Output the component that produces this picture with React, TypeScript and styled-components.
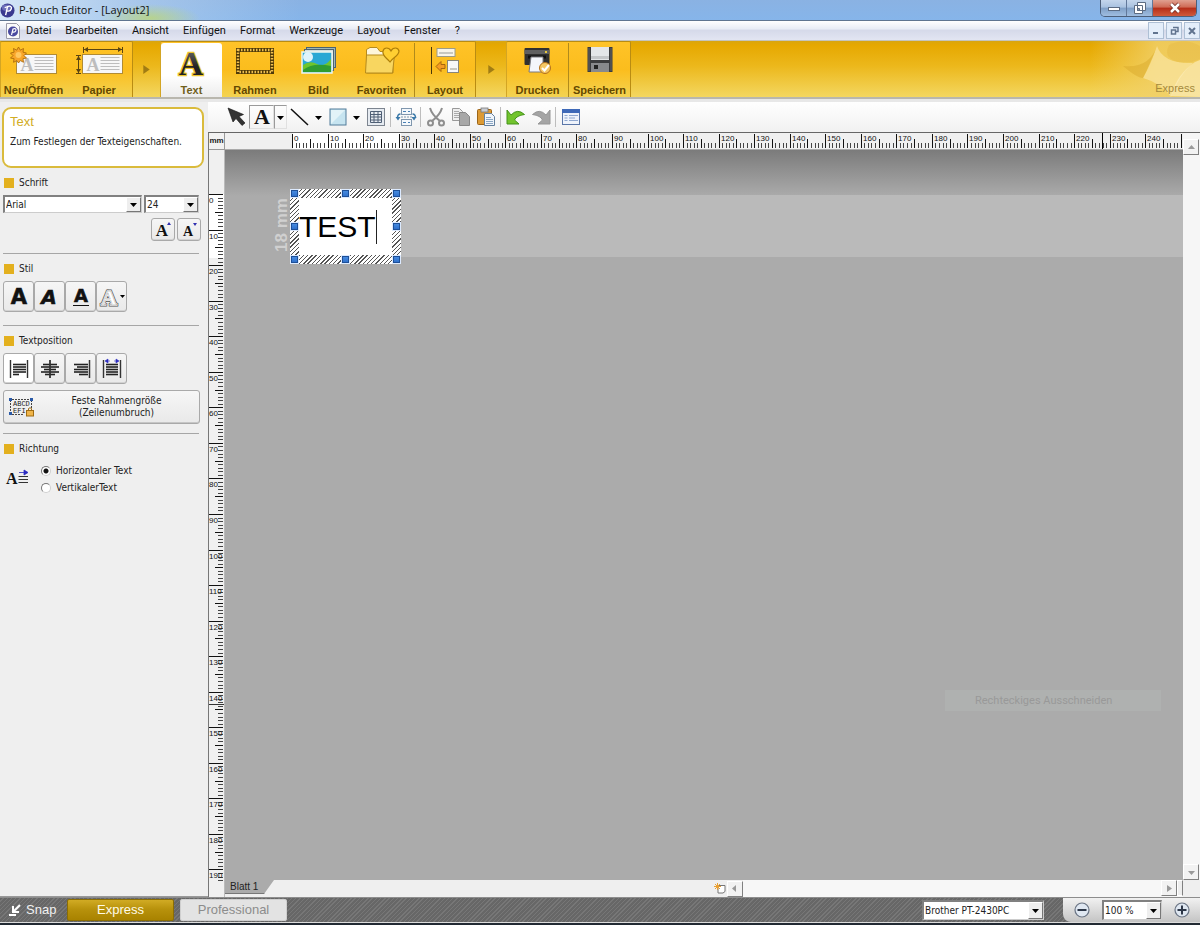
import React, { useLayoutEffect, useRef, useState } from 'react';
import styled, { createGlobalStyle, css } from 'styled-components';

const MM = 3.555;
const UI = "'DejaVu Sans Condensed', 'Liberation Sans', sans-serif";
const MENU = "Roboto, 'Liberation Sans', sans-serif";
const SANS = "'Liberation Sans', Arial, sans-serif";

const Global = createGlobalStyle`
  *, *::before, *::after { box-sizing: border-box; }
  body { margin: 0; font: 10px/14px ${UI}; color: #222; background: #efefef; }
  button, input, select { font: inherit; color: inherit; margin: 0; padding: 0; }
  button { border: 0; background: none; }
  svg { display: block; flex: none; overflow: visible; }
`;

const App = styled.div`
  height: 100vh;
  min-height: 600px;
  display: flex;
  flex-direction: column;
  overflow: hidden;
`;

/* ---------- title and menu ---------- */

const TitleBar = styled.header`
  display: flex;
  align-items: center;
  height: 21px;
  padding-right: 3px;
  gap: 4px;
  font: 11px/20px 'Open Sans', sans-serif;
  color: #111;
  background:
    radial-gradient(ellipse 50px 14px at 150px 18px, rgba(190, 215, 110, 0.75), transparent),
    linear-gradient(90deg, rgba(225, 238, 250, 0.85), rgba(190, 215, 240, 0.5) 150px, transparent 300px),
    linear-gradient(#8ab2e3, #86b5ea);
  border-bottom: 1px solid #5f7590;
`;

const WindowButtons = styled.div`
  display: flex;
  align-self: flex-start;
  margin-left: auto;
  border: 1px solid #4c5f7a;
  border-top: 0;
  border-radius: 0 0 5px 5px;
  overflow: hidden;
`;

const WindowButton = styled.button<{ $close?: boolean }>`
  display: flex;
  align-items: center;
  justify-content: center;
  width: ${p => (p.$close ? 43 : 26)}px;
  height: 16px;
  border-right: ${p => (p.$close ? '0' : '1px solid #61789a')};
  background: ${p => (p.$close
    ? 'linear-gradient(#e0a090, #cf6a55 45%, #b52d18 50%, #cf5a3c)'
    : 'linear-gradient(#c4d6ec, #a9c2e0 45%, #7f9fc6 50%, #9fbde0)')};
`;

const MenuBar = styled.nav`
  display: flex;
  align-items: center;
  height: 20px;
  padding-left: 6px;
  font: 11px/18px ${MENU};
  background: linear-gradient(#fff, #e9edf6 40%, #d6daea 50%, #e2e5f2);
  border-bottom: 1px solid #c5c4bc;
`;

const MenuItem = styled.button`
  height: 18px;
  margin-left: 14px;
  color: #111;
  &:first-of-type { margin-left: 6px; }
`;

const MdiButtons = styled.div`
  display: flex;
  gap: 2px;
  margin-left: auto;
`;

const MdiButton = styled.button`
  display: flex;
  align-items: center;
  justify-content: center;
  width: 16px;
  height: 17px;
  border: 1px solid #aebfd4;
  background: #e4eefa;
`;

/* ---------- ribbon ---------- */

const Ribbon = styled.div`
  display: flex;
  height: 58px;
  background: linear-gradient(#d9a50f, #e6a800 4px, #ecb81c 45%, #f4d760);
  border-bottom: 2px solid #b9b7ae;
`;

const RibbonGroup = styled.div`
  display: flex;
  padding-top: 1px;
  border: 1px solid #b98c12;
  border-left-color: #d3a524;
  border-bottom: 0;
  border-radius: 2px 2px 0 0;
  background: linear-gradient(#ffc328, #fbbd1d 50%, #f3d352);
`;

const RibbonButton = styled.button<{ $w: number; $active?: boolean; $line?: boolean }>`
  display: flex;
  flex-direction: column;
  align-items: center;
  justify-content: space-between;
  width: ${p => p.$w}px;
  padding-top: 4px;
  font: bold 11px/14px ${SANS};
  color: #644800;
  white-space: nowrap;
  ${p => p.$line && css`border-right: 1px solid #b08a1c;`}
  ${p => p.$active && css`
    color: #70601c;
    background: linear-gradient(#fff 60%, #ececec);
    border-radius: 3px 3px 0 0;
  `}
`;

const RibbonArrow = styled.div<{ $w: number }>`
  display: flex;
  align-items: center;
  justify-content: center;
  width: ${p => p.$w}px;
`;

const RibbonBrand = styled.div`
  display: flex;
  align-items: flex-end;
  justify-content: flex-end;
  width: 110px;
  margin-left: auto;
  position: relative;
  color: #a58a3c;
  font: 11px/14px ${SANS};
  padding: 0 5px 2px 0;
  background: linear-gradient(90deg, rgba(240, 205, 90, 0), rgba(241, 208, 104, 0.85) 60%);
`;

const BrandArt = styled.svg`
  position: absolute;
  top: 0;
  right: 0;
  overflow: hidden;
`;

const BrandName = styled.span`
  position: relative;
`;

/* ---------- body ---------- */

const Body = styled.div`
  flex: 1;
  min-height: 0;
  display: flex;
  border-top: 3px solid #e8e8e8;
`;

const Sidebar = styled.aside`
  width: 208px;
  flex: none;
  padding: 5px 4px 0 2px;
  background: #efefef;
  border-bottom: 1px solid #999;
`;

const InfoCard = styled.section`
  height: 61px;
  padding: 5px 6px;
  border: 2px solid #dabb3c;
  border-radius: 9px;
  background: #fff;
`;

const InfoTitle = styled.h2`
  margin: 0 0 5px;
  font: 13px/16px ${SANS};
  color: #d2ad25;
`;

const InfoText = styled.p`
  margin: 0;
  white-space: nowrap;
`;

const Section = styled.section<{ $h: number }>`
  height: ${p => p.$h}px;
  margin: 0 5px 0 1px;
  padding-top: 8px;
  & + & { border-top: 1px solid #a6a6a6; }
`;

const SectionTitle = styled.h3`
  display: flex;
  align-items: center;
  gap: 5px;
  margin: 0 0 5px 1px;
  font: 10px/14px ${UI};
  &::before {
    content: '';
    width: 10px;
    height: 10px;
    background: #e3b01e;
  }
`;

const ButtonRow = styled.div<{ $end?: boolean }>`
  display: flex;
  gap: ${p => (p.$end ? 2 : 0)}px;
  justify-content: ${p => (p.$end ? 'flex-end' : 'flex-start')};
  margin: ${p => (p.$end ? '5px -2px 0 0' : '0')};
`;

const PanelButton = styled.button<{ $small?: boolean; $on?: boolean }>`
  display: flex;
  align-items: center;
  justify-content: center;
  width: ${p => (p.$small ? 24 : 31)}px;
  height: ${p => (p.$small ? 23 : 31)}px;
  border: 1px solid #a9a9a9;
  border-radius: 3px;
  background: ${p => (p.$on ? '#fff' : 'linear-gradient(#f6f6f6, #e9e9e9)')};
  box-shadow: inset 0 -1px #d2d2d2;
`;

const WideButton = styled.button`
  display: flex;
  align-items: center;
  width: 197px;
  height: 34px;
  margin-top: 6px;
  padding-left: 4px;
  border: 1px solid #a9a9a9;
  border-radius: 3px;
  background: linear-gradient(#f6f6f6, #e9e9e9);
  box-shadow: inset 0 -1px #c6c6c6;
  line-height: 12px;
`;

const WideLabel = styled.span`
  flex: 1;
`;

const SelectRow = styled.div`
  display: flex;
  gap: 2px;
`;

const SelectBox = styled.span<{ $w: number; $h?: number }>`
  position: relative;
  display: block;
  width: ${p => p.$w}px;
  height: ${p => p.$h ?? 18}px;
  border: 1px solid #808080;
  border-width: 2px 1px 1px 2px;
  border-right-color: #ccc;
  border-bottom-color: #ccc;
  background: #fff;
`;

const SelectArrow = styled.span`
  position: absolute;
  top: 0;
  right: 0;
  bottom: 0;
  display: flex;
  align-items: center;
  justify-content: center;
  width: 15px;
  background: #eee;
  border: 1px solid #fff;
  border-right-color: #777;
  border-bottom-color: #777;
  pointer-events: none;
`;

const Select = styled.select`
  appearance: none;
  display: block;
  width: 100%;
  height: 100%;
  padding-left: 1px;
  border: 0;
  border-radius: 0;
  background: transparent;
`;

const Direction = styled.div`
  display: flex;
  align-items: center;
  gap: 11px;
  padding: 1px 0 0 3px;
`;

const Options = styled.div`
  display: flex;
  flex-direction: column;
`;

const RadioLabel = styled.label`
  display: flex;
  align-items: center;
  gap: 5px;
  height: 17px;
`;

const Radio = styled.input`
  appearance: none;
  width: 10px;
  height: 10px;
  border: 1px solid #777;
  border-right-color: #d0d0d0;
  border-bottom-color: #d0d0d0;
  border-radius: 50%;
  background: #fff;
  &:checked { background: radial-gradient(circle, #111 2px, #fff 3px); }
`;

/* ---------- editor ---------- */

const Editor = styled.main`
  flex: 1;
  min-width: 0;
  display: flex;
  flex-direction: column;
`;

const Toolbar = styled.div`
  display: flex;
  align-items: center;
  height: 30px;
  padding-left: 16px;
  background: linear-gradient(#fff, #f1f1f1);
`;

const Tool = styled.button<{ $drop?: boolean; $on?: boolean }>`
  display: flex;
  align-items: center;
  justify-content: center;
  width: ${p => (p.$drop ? 13 : 25)}px;
  height: 24px;
  ${p => p.$on && css`
    border: 1px solid #9a9a9a;
    border-right-color: #e0e0e0;
    border-bottom-color: #e0e0e0;
  `}
`;

const ToolLine = styled.span`
  width: 1px;
  height: 20px;
  margin: 0 2px;
  background: #bdbdbd;
`;

const Workspace = styled.div`
  flex: 1;
  min-height: 0;
  display: grid;
  grid-template-columns: 16px minmax(0, 1fr) 17px;
  grid-template-rows: 17px minmax(0, 1fr) 17px;
  border-top: 1px solid #666;
  border-left: 1px solid #777;
`;

const UnitCell = styled.div`
  display: flex;
  align-items: center;
  justify-content: center;
  font: bold 8px/10px ${SANS};
  color: #222;
  background: #f2f2f2;
  border-right: 1px solid #999;
  border-bottom: 1px solid #999;
`;

const RulerBox = styled.div<{ $tall?: boolean }>`
  overflow: hidden;
  background: #f0f0f0;
  ${p => p.$tall && css`grid-row: 2 / 4;`}
  svg { width: 100%; height: 100%; }
  text { font: 8px ${SANS}; fill: #111; }
`;

const ScrollColumn = styled.div`
  grid-row: 1 / 3;
  grid-column: 3;
  display: flex;
  flex-direction: column;
  justify-content: space-between;
  padding-top: 6px;
  background: #f6f6f6;
`;

const ScrollButton = styled.button`
  display: flex;
  align-items: center;
  justify-content: center;
  width: 16px;
  height: 16px;
  background: #f2f2f2;
  border: 1px solid #fff;
  border-right-color: #808080;
  border-bottom-color: #808080;
`;

const Canvas = styled.div`
  grid-column: 2;
  position: relative;
  overflow: hidden;
  background: linear-gradient(#7b7b7b, #949494 24px, #ababab 46px);
`;

const Tape = styled.div`
  position: absolute;
  left: 68px;
  right: 0;
  top: 45px;
  height: 62px;
  background: #bababa;
`;

const TapeWidth = styled.span`
  position: absolute;
  left: 48px;
  top: 48px;
  writing-mode: vertical-rl;
  transform: rotate(180deg);
  font: bold 17px/18px ${SANS};
  color: #d0d0d0;
`;

const TextFrame = styled.div`
  position: absolute;
  left: 65px;
  top: 39px;
  width: 111px;
  height: 75px;
  padding: 9px;
  background: repeating-linear-gradient(135deg, #fff 0 2px, #555 2px 3px);
`;

const FrameInner = styled.div`
  display: flex;
  align-items: center;
  height: 100%;
  background: #fff;
`;

const FrameInput = styled.input`
  width: 77px;
  height: 34px;
  border: 0;
  outline: 0;
  background: transparent;
  font: 30px/34px ${SANS};
  color: #000;
`;

const Caret = styled.span`
  width: 1px;
  height: 34px;
  background: #222;
`;

const Handle = styled.i<{ $x: number; $y: number }>`
  position: absolute;
  left: ${p => p.$x}px;
  top: ${p => p.$y}px;
  width: 9px;
  height: 9px;
  border: 1px solid #dceaff;
  background: linear-gradient(#4a90e4, #2a6bc8);
  box-shadow: inset 0 0 0 1px #1d4f98;
`;

const Ghost = styled.div`
  position: absolute;
  left: 720px;
  top: 540px;
  width: 216px;
  height: 21px;
  padding-left: 30px;
  font: 11px/21px ${MENU};
  color: #999;
  background: #afb1b0;
`;

const SheetRow = styled.div`
  grid-column: 2;
  display: flex;
  background: #efefef;
`;

const SheetTab = styled.button`
  width: 49px;
  height: 14px;
  padding-left: 5px;
  text-align: left;
  font: 10px/13px ${SANS};
  color: #222;
  background: #ababab;
  border-bottom: 1px solid #777;
  clip-path: polygon(0 0, 100% 0, 39px 100%, 0 100%);
`;

const SheetScroll = styled.div`
  display: flex;
  justify-content: space-between;
  width: 49%;
  margin-left: auto;
  background: #f7f7f7;
`;

const SheetScrollStart = styled.div`
  display: flex;
  align-items: center;
  gap: 1px;
  background: #efefef;
`;

const SheetScrollEnd = styled.div`
  display: flex;
`;

const Splitter = styled.span`
  width: 6px;
  height: 16px;
  border: 1px solid #fff;
  border-right-color: #808080;
  background: #eee;
`;

const Corner = styled.div`
  grid-column: 3;
  background: #efefef;
`;

/* ---------- status bar ---------- */

const StatusBar = styled.footer`
  display: flex;
  align-items: center;
  height: 26px;
  flex: none;
  background: repeating-linear-gradient(135deg, #676767 0 2px, #777 2px 3px);
  border-top: 1px solid #8d8d8d;
  border-bottom: 1px solid #ddd;
`;

const Desk = styled.div`
  height: 2px;
  flex: none;
  background: #222a33;
`;

const Snap = styled.button`
  display: flex;
  align-items: center;
  gap: 4px;
  width: 67px;
  padding-left: 8px;
  font: 13px/20px ${SANS};
  color: #f2f2f2;
`;

const ModeButton = styled.button<{ $on?: boolean }>`
  width: 107px;
  height: 22px;
  margin-right: 6px;
  font: 13px/20px ${SANS};
  color: ${p => (p.$on ? '#fffbe8' : '#8c8c8c')};
  background: ${p => (p.$on ? 'linear-gradient(#d1ab24, #b8920c 45%, #a88200)' : '#e3e3e3')};
  border: 1px solid ${p => (p.$on ? '#8b6d04' : '#cfcfcf')};
  border-radius: 2px;
`;

const Printer = styled.div`
  margin-left: auto;
  margin-right: 19px;
`;

const Zoom = styled.div`
  display: flex;
  align-items: center;
  gap: 12px;
  height: 100%;
  padding: 0 10px 0 11px;
  border-radius: 0 0 0 8px;
  background: linear-gradient(#f1f1f1, #c4c4c4);
`;

/* ---------- drawings ---------- */

const Arrow = ({ dir = 'down', color = '#000', s = 7 }: { dir?: string; color?: string; s?: number }) => {
  const d: Record<string, string> = {
    down: 'M0 2h7L3.500 6z', up: 'M0 5h7L3.500 1z', left: 'M5 0v7L1 3.500z', right: 'M1 0v7l5-3.500z',
  };
  return <svg width={s} height={s} viewBox="0 0 7 7"><path d={d[dir]} fill={color} /></svg>;
};

const Logo = ({ size }: { size: number }) => (
  <svg width={size} height={size} viewBox="0 0 16 16">
    <circle cx="8" cy="8" r="7.500" fill="#39398f" />
    <ellipse cx="7" cy="5" rx="5" ry="3.500" fill="#8184cc" opacity=".7" />
    <path d="M6 13l2-9c3-1.500 5 0 4 2.500-.7 1.800-2.500 2.500-4.500 2" fill="none" stroke="#fff" strokeWidth="1.500" />
    <path d="M5 5l3-1" stroke="#fff" strokeWidth="1.300" />
  </svg>
);

const DocLogo = () => (
  <svg width="14" height="16" viewBox="0 0 14 16">
    <path d="M.5.500h10l3 3v12H.500z" fill="#fafafa" stroke="#9a9aa8" />
    <circle cx="7" cy="8.500" r="5" fill="#4a4aa0" />
    <path d="M5.500 12l1.500-6c2-1 3.500 0 2.800 1.700-.5 1.200-1.700 1.600-3 1.300" fill="none" stroke="#fff" strokeWidth="1.200" />
  </svg>
);

const CardLines = ({ x, y }: { x: number; y: number }) => (
  <g>
    <rect x={x} y={y} width="40" height="19" fill="#f7f7f7" stroke="#b08b35" />
    <text x={x + 4} y={y + 16} fontFamily="Liberation Serif" fontWeight="bold" fontSize="18" fill="#bdbdbd">A</text>
    {[4, 7, 10, 13, 16].map(o => <path key={o} d={`M${x + 18} ${y + o - 1}h19`} stroke="#bdbdbd" />)}
  </g>
);

const NewIcon = () => (
  <svg width="48" height="32" viewBox="0 0 48 32">
    <CardLines x={6.5} y={7.5} />
    <path d="M8.500 0l1.800 3.200L13.500 1.500l-.5 3.700 3.500.8-2.500 2.600 2.500 2.500-3.500.6.5 3.600-3.200-1.700L8.500 16l-1.700-2.400-3.300 1.700.6-3.600-3.600-.6L3 8.600.500 6l3.600-.8-.6-3.700L6.800 3.200z" fill="#f8a52a" stroke="#a56408" strokeWidth=".8" />
    <circle cx="8.500" cy="8" r="3" fill="#ffc860" />
  </svg>
);

const PaperIcon = () => (
  <svg width="48" height="32" viewBox="0 0 48 32">
    <CardLines x={7.5} y={7.5} />
    <g stroke="#5c4510" fill="#5c4510">
      <path d="M8.500 0v6M47.500 0v6M9 2.500h38M1 8.500h5M1 26.500h5M3.500 9v17" />
      <path d="M9 2.500l4-2.500v5zM47 2.500l-4-2.500v5zM3.500 9l-2.500 4h5zM3.500 26l-2.500-4h5z" stroke="none" />
    </g>
  </svg>
);

const TextIcon = () => (
  <svg width="34" height="32" viewBox="0 0 34 32">
    <defs><linearGradient id="ta" x1="0" y1="0" x2="0" y2="1"><stop offset="0" stopColor="#777" /><stop offset=".6" stopColor="#222" /></linearGradient></defs>
    <text x="16" y="28" textAnchor="middle" fontFamily="Liberation Serif" fontWeight="bold" fontSize="34" fill="url(#ta)" stroke="#edc52c" strokeWidth="2.500" paintOrder="stroke">A</text>
  </svg>
);

const FrameIcon = () => (
  <svg width="40" height="32" viewBox="0 0 40 32">
    <rect x="3" y="3" width="34" height="22" fill="none" stroke="#4f3a08" strokeWidth="4" />
    <rect x="3" y="3" width="34" height="22" fill="none" stroke="#f0c050" strokeWidth="2.500" strokeDasharray="1.500 1.500" />
  </svg>
);

const ImageIcon = () => (
  <svg width="36" height="32" viewBox="0 0 36 32">
    <rect x="5.500" y=".5" width="29" height="20" fill="#9fb8b8" stroke="#4d6370" />
    <rect x="3.500" y="2.500" width="29" height="21" fill="#d4dfdf" stroke="#4d6370" />
    <rect x="1" y="5" width="30" height="21" fill="#2aa8d4" stroke="#eef6ee" strokeWidth="1.500" />
    <circle cx="7" cy="10" r="5" fill="#dff4fb" />
    <path d="M2 18q7-5 14-1t14-5v13H2z" fill="#6fc52c" />
    <path d="M2 23q10-8 28-4v6H2z" fill="#2f9c31" />
  </svg>
);

const FavIcon = () => (
  <svg width="36" height="32" viewBox="0 0 36 32">
    <path d="M2.500 26V2.500L6 .5h7l3 4h13V26z" fill="#fdf6dc" stroke="#b68b1c" />
    <path d="M1.500 26l1-18h28l-2 18z" fill="#f8d660" stroke="#b68b1c" />
    <path d="M26 15c-4-5-8-6-7-11 1-4 6-4 8 0 2-4 7-4 8 0 0 5-6 6-9 11z" fill="#ffcf32" stroke="#af7f09" strokeWidth="1.200" />
  </svg>
);

const LayoutIcon = () => (
  <svg width="30" height="32" viewBox="0 0 30 32">
    <path d="M1.500 0v27" stroke="#4a380a" />
    <rect x="7" y="1.500" width="18" height="8" fill="#f8f5ea" stroke="#9c9c88" />
    <rect x="17.500" y="13.500" width="11" height="12" fill="#f8f8f8" stroke="#88867a" />
    <path d="M6 19.500l5-5v3h4v4h-4v3z" fill="#f59c23" stroke="#a8660d" />
    <path d="M9 6h14M20 22h7" stroke="#c8c8c0" strokeWidth="2" />
  </svg>
);

const PrintIcon = () => (
  <svg width="30" height="32" viewBox="0 0 30 32">
    <rect x="1.500" y="1" width="25" height="17" rx="1" fill="#303030" />
    <path d="M1.500 3h25v4h-25z" fill="#606060" />
    <rect x="22" y="4" width="2" height="2" fill="#e8c83c" />
    <path d="M5 10h18" stroke="#111" strokeWidth="3" />
    <path d="M8 10h12v15H6z" fill="#f4f6fb" stroke="#7a7a80" />
    <circle cx="22" cy="21" r="5.500" fill="#f6c864" stroke="#b5711c" />
    <path d="M19 21l2.500 2.500L26 18" fill="none" stroke="#fff" strokeWidth="2" />
  </svg>
);

const SaveIcon = () => (
  <svg width="28" height="32" viewBox="0 0 28 32">
    <path d="M1.500 0h25v25h-25z" fill="#3b3b3d" />
    <path d="M5 0h18v13H5z" fill="#e4e6e8" />
    <path d="M5 9h18v3H5z" fill="#c4c6c8" />
    <path d="M5 16h18v9H5z" fill="#88898c" />
    <rect x="8" y="18" width="4" height="4" fill="#222" />
    <path d="M3 1v23M25 1v23" stroke="#666" />
  </svg>
);

const Glyph = ({ size, slant, underline }: { size: number; slant?: boolean; underline?: boolean }) => (
  <svg width="26" height="24" viewBox="0 0 26 24">
    <text x={slant ? 12 : 13} y={underline ? 17 : 19} textAnchor="middle" fontSize={size} fontWeight="bold"
      fontStyle={slant ? 'italic' : 'normal'} fontFamily="DejaVu Sans" fill="#111" stroke="#111" strokeWidth=".6">A</text>
    {underline && <path d="M5 20.500h16" stroke="#111" />}
  </svg>
);

const OutlineGlyph = () => (
  <svg width="28" height="24" viewBox="0 0 28 24">
    <g fontFamily="Liberation Serif" fontSize="22" fontWeight="bold" textAnchor="middle">
      <text x="11" y="20" fill="#555" stroke="#555" strokeWidth="3">A</text>
      <text x="11" y="20" fill="#fff" stroke="#fff" strokeWidth="1.500">A</text>
      <text x="11" y="20" fill="#fff" stroke="#999" strokeWidth=".4">A</text>
    </g>
    <path d="M22 10h5l-2.500 3z" fill="#000" />
  </svg>
);

const SizeGlyph = ({ up }: { up?: boolean }) => (
  <svg width="20" height="18" viewBox="0 0 20 18">
    <text x="9" y="15" textAnchor="middle" fontSize={up ? 17 : 14} fontWeight="bold" fontFamily="Liberation Serif" fill="#111">A</text>
    <path d={up ? 'M14 4h4l-2-3z' : 'M14 2h4l-2 3z'} fill="#3030b0" />
  </svg>
);

const rowsFor: Record<string, [number, number][]> = {
  left: [[4, 17], [4, 17], [4, 17], [4, 17], [4, 10]],
  center: [[3, 17], [1, 19], [4, 16], [1, 19], [5, 15]],
  right: [[3, 17], [6, 17], [3, 17], [3, 17], [8, 17]],
  block: [[4, 16], [4, 16], [4, 16], [4, 16], [4, 16]],
};

const AlignIcon = ({ kind }: { kind: string }) => (
  <svg width="20" height="20" viewBox="0 0 20 20">
    {rowsFor[kind].map(([a, b], i) => <path key={i} d={`M${a} ${5.5 + i * 2.5}H${b}`} stroke="#222" strokeWidth="1.600" />)}
    {(kind === 'left' || kind === 'block') && <path d="M1.500 1v18M18.500 1v18" stroke="#333" strokeWidth="1.400" />}
    {kind === 'center' && <path d="M10 1v18" stroke="#333" strokeWidth="1.800" />}
    {kind === 'right' && <path d="M18.500 1v18" stroke="#333" strokeWidth="1.500" />}
    {kind === 'block' && <path d="M3 2l3-2v4zM17 2l-3-2v4zM6 2h2M12 2h2" fill="#2b2bc0" stroke="#2b2bc0" strokeWidth=".6" />}
  </svg>
);

const FixedIcon = () => (
  <svg width="26" height="20" viewBox="0 0 26 20">
    <path d="M2.500 3v13M23.500 3v8M4 2.500h18M4 17.500h12" stroke="#444" strokeDasharray="2 1" />
    <text x="5" y="9" fontSize="7" fontFamily="Liberation Mono" fill="#222">ABCD</text>
    <text x="5" y="16" fontSize="7" fontFamily="Liberation Mono" fill="#222">EFI</text>
    <path d="M1 1h3v3H1zM22 1h3v3h-3zM1 15h3v3H1z" fill="#2a5aa8" />
    <path d="M20.500 14v-2.500q1.500-1.500 3 0V14" fill="none" stroke="#a06c12" />
    <rect x="18.500" y="13.500" width="7" height="5.500" fill="#f0b54a" stroke="#a06c12" />
  </svg>
);

const DirectionIcon = () => (
  <svg width="24" height="18" viewBox="0 0 24 18">
    <text x="0" y="14" fontSize="16" fontWeight="bold" fontFamily="Liberation Serif" fill="#111">A</text>
    <path d="M12.500 6.500H22M12.500 9.500H22M12.500 12.500H22" stroke="#333" />
    <path d="M13 2.500h6M18 0l4 2.500L18 5z" fill="#2b2bc0" stroke="#2b2bc0" strokeWidth=".8" />
  </svg>
);

const icon = (body: React.ReactNode) => <svg width="20" height="20" viewBox="0 0 20 20">{body}</svg>;

const Pointer = () => icon(<path d="M1 1l5 14 3-3.500 6 7 3-2.500-6-6.500 4.500-2z" fill="#333" stroke="#111" strokeWidth=".6" />);
const Line = () => icon(<path d="M1 2l17 16" stroke="#111" strokeWidth="1.500" />);
const Square = () => icon(<g><rect x="2" y="2" width="16" height="16" fill="#c6e4f0" stroke="#537d9a" /><path d="M3 17L17 3H3z" fill="#e2f3f8" /></g>);
const TableIcon = () => icon(<g fill="none"><rect x="1.500" y="1.500" width="17" height="17" fill="#e6ebf1" stroke="#7d8590" /><path d="M4.500 4.500h11v11h-11zM4.500 7.500h11M4.500 10h11M4.500 13h11M8 4.500v11M12 4.500v11" stroke="#4f5f75" /></g>);
const FeedIcon = () => icon(<g><rect x="5.500" y="1.500" width="10" height="6" fill="#f4f8fc" stroke="#8097ae" /><rect x="5.500" y="12.500" width="10" height="6" fill="#f4f8fc" stroke="#8097ae" /><path d="M7 4.500h3M12 4.500h2M7 15.500h3M12 15.500h2" stroke="#4980b5" /><path d="M4.500 7q-3 0-3 4M16.500 7q3 0 3 4" fill="none" stroke="#3b79a9" strokeWidth="1.500" /><path d="M-.500 10h5L2 13.500zM15.500 10h5L18 13.500z" fill="#3b79a9" /><path d="M5 10h11" stroke="#8097ae" strokeDasharray="2 1" /></g>);
const Cut = () => icon(<g fill="none" stroke="#8e8e8e" strokeWidth="2"><path d="M4 1q2 7 10 13M16 1q-2 7-10 13" /><circle cx="4.500" cy="16" r="2.500" /><circle cx="15.500" cy="16" r="2.500" /></g>);
const Copy = () => icon(<g><path d="M1.500 1.500h7l3 3v9h-10z" fill="#eee" stroke="#999" /><path d="M3 4.500h5M3 6.500h5M3 8.500h5M3 10.500h5" stroke="#aaa" /><path d="M8.500 5.500h6l4 4v9h-10z" fill="#a8a8a8" stroke="#888" /></g>);
const Paste = () => icon(<g><rect x="1.500" y="2.500" width="14" height="15" rx="1" fill="#dc9a34" stroke="#9c6518" /><rect x="5" y="1" width="7" height="4" fill="#c9ccd2" stroke="#777" strokeWidth=".8" /><path d="M8.500 6.500h7l3 3v9h-10z" fill="#f0f5fb" stroke="#64809e" /><path d="M10 10.500h5M10 12.500h7M10 14.500h7M10 16.500h7" stroke="#8aa6c4" /></g>);
const Undo = () => icon(<path d="M1 3v14h12l-4.500-4q2-4.500 10-5.500-7-6.500-13.500.5z" fill="#72c42d" stroke="#45931b" />);
const Redo = () => icon(<path d="M19 3v14H7l4.500-4q-2-4.500-10-5.500 7-6.500 13.500.5z" fill="#a4a4a4" stroke="#969696" />);
const Props = () => icon(<g><rect x="1.500" y="2.500" width="17" height="15" fill="#eef3fb" stroke="#5a76a8" /><path d="M1 2h18v4H1z" fill="#3e69b8" /><path d="M3.500 8.500h3M3.500 11h3M3.500 13.500h3M8 8.500h9M8 11h6M8 13.500h9" stroke="#8fa7cf" /></g>);
const BoldA = () => (
  <svg width="22" height="22" viewBox="0 0 22 22">
    <text x="11" y="18" textAnchor="middle" fontSize="22" fontWeight="bold" fontFamily="Liberation Serif" fill="#111">A</text>
  </svg>
);

const RoundSign = ({ plus }: { plus?: boolean }) => (
  <svg width="16" height="16" viewBox="0 0 16 16">
    <circle cx="8" cy="8" r="7" fill="#dfe7f1" stroke="#6a7484" strokeWidth="1.200" />
    <path d={plus ? 'M3.500 8h9M8 3.500v9' : 'M3.500 8h9'} stroke="#2d3748" strokeWidth="2" />
  </svg>
);

/* ---------- rulers: one tick per millimetre, as many as the window shows ---------- */

const useSize = () => {
  const ref = useRef<HTMLDivElement>(null);
  const [size, setSize] = useState({ w: 0, h: 0 });
  useLayoutEffect(() => {
    const el = ref.current;
    if (!el) return;
    const read = () => setSize({ w: el.clientWidth, h: el.clientHeight });
    read();
    const observer = new ResizeObserver(read);
    observer.observe(el);
    return () => observer.disconnect();
  }, []);
  return { ref, size };
};

const count = (length: number, step: number) =>
  Array.from({ length: Math.max(0, Math.ceil(length / step)) }, (_, i) => i);

const HorizontalRuler = () => {
  const { ref, size } = useSize();
  return (
    <RulerBox ref={ref}>
      <svg>
        <rect x="68" width="108" height="17" fill="#fff" />
        {count(size.w - 68, MM).map(i => {
          const x = Math.round(67 + i * MM) + 0.5;
          const top = i % 10 === 0 ? 1 : i % 5 === 0 ? 6 : 10;
          return <path key={i} d={`M${x} ${top}V15`} stroke={i % 5 ? '#444' : '#111'} />;
        })}
        {count(size.w - 84, MM * 10).map(i => <text key={i} x={Math.round(69 + i * 10 * MM)} y="8">{i * 10}</text>)}
        <path d="M877.500 0v16" stroke="#000" />
        <path d={`M0 16.500h${size.w}`} stroke="#aaa" />
      </svg>
    </RulerBox>
  );
};

const VerticalRuler = () => {
  const { ref, size } = useSize();
  return (
    <RulerBox ref={ref} $tall>
      <svg>
        <rect y="44" width="15" height="64" fill="#fff" />
        {count(size.h - 60, MM).map(i => {
          const y = Math.round(44 + i * MM) + 0.5;
          const left = i % 10 === 0 ? 0 : i % 5 === 0 ? 6 : 9;
          return <path key={i} d={`M${left} ${y}H14`} stroke={i % 5 ? '#444' : '#111'} />;
        })}
        {count(size.h - 60, MM * 10).map(i => <text key={i} x="0" y={Math.round(53 + i * 10 * MM)}>{i * 10}</text>)}
        <path d="M0 554.500h15" stroke="#333" />
        <path d={`M15.500 0v${size.h}`} stroke="#bbb" />
      </svg>
    </RulerBox>
  );
};

const handles: [number, number][] = [[0, 0], [51, 0], [102, 0], [0, 33], [102, 33], [0, 66], [51, 66], [102, 66]];
const menus = ['Datei', 'Bearbeiten', 'Ansicht', 'Einfügen', 'Format', 'Werkzeuge', 'Layout', 'Fenster', '?'];

const Dropdown = ({ label, value, w, h }: { label: string; value: string; w: number; h?: number }) => (
  <SelectBox $w={w} $h={h}>
    <Select aria-label={label} defaultValue={value}><option>{value}</option></Select>
    <SelectArrow><Arrow /></SelectArrow>
  </SelectBox>
);

export default function PTouchEditor() {
  return (
    <>
      <Global />
      <App>
        <TitleBar>
          <Logo size={15} />
          <span>P-touch Editor - [Layout2]</span>
          <WindowButtons>
            <WindowButton aria-label="Minimieren"><svg width="12" height="8"><rect x=".5" y="3.500" width="11" height="3" fill="#fff" stroke="#5b6b82" /></svg></WindowButton>
            <WindowButton aria-label="Wiederherstellen"><svg width="12" height="12"><path d="M3.500.500h8v8h-8zM.500 3.500h8v8h-8z" fill="#fff" stroke="#5b6b82" /><path d="M3.500 6.500h2v2h-2z" fill="#89a" stroke="#5b6b82" /></svg></WindowButton>
            <WindowButton aria-label="Schließen" $close><svg width="12" height="10"><path d="M2 1l8 8M10 1L2 9" stroke="#6f2a22" strokeWidth="4" /><path d="M2 1l8 8M10 1L2 9" stroke="#fff" strokeWidth="2.500" /></svg></WindowButton>
          </WindowButtons>
        </TitleBar>
        <MenuBar>
          <DocLogo />
          {menus.map(m => <MenuItem key={m}>{m}</MenuItem>)}
          <MdiButtons>
            <MdiButton aria-label="Fenster minimieren"><svg width="8" height="8"><path d="M1 6h5" stroke="#61748f" strokeWidth="2" /></svg></MdiButton>
            <MdiButton aria-label="Fenster wiederherstellen"><svg width="9" height="9"><path d="M3 1.500h5v4H6M1.500 4h4v4h-4z" fill="none" stroke="#61748f" strokeWidth="1.500" /></svg></MdiButton>
            <MdiButton aria-label="Fenster schließen"><svg width="8" height="8"><path d="M1 1l6 6M7 1L1 7" stroke="#61748f" strokeWidth="2" /></svg></MdiButton>
          </MdiButtons>
        </MenuBar>
        <Ribbon>
          <RibbonGroup>
            <RibbonButton $w={65}><NewIcon />Neu/Öffnen</RibbonButton>
            <RibbonButton $w={66}><PaperIcon />Papier</RibbonButton>
          </RibbonGroup>
          <RibbonArrow $w={27}><Arrow dir="right" color="#a07c14" s={9} /></RibbonArrow>
          <RibbonGroup>
            <RibbonButton $w={61} $active><TextIcon />Text</RibbonButton>
            <RibbonButton $w={66}><FrameIcon />Rahmen</RibbonButton>
            <RibbonButton $w={61}><ImageIcon />Bild</RibbonButton>
            <RibbonButton $w={66} $line><FavIcon />Favoriten</RibbonButton>
            <RibbonButton $w={60}><LayoutIcon />Layout</RibbonButton>
          </RibbonGroup>
          <RibbonArrow $w={30}><Arrow dir="right" color="#a07c14" s={9} /></RibbonArrow>
          <RibbonGroup>
            <RibbonButton $w={62} $line><PrintIcon />Drucken</RibbonButton>
            <RibbonButton $w={61}><SaveIcon />Speichern</RibbonButton>
          </RibbonGroup>
          <RibbonBrand>
            <BrandArt width="85" height="56" viewBox="0 0 85 56">
              <path d="M42 5q6 18 36 17-14 12-22 34-10-14-28-19 8-14 14-32z" fill="#fbe9ae" opacity=".6" />
              <path d="M8 25q14 12 20 12 6-12 14-32Q34 28 8 25z" fill="#d9a92c" opacity=".5" />
              <path d="M54 4q-6 12 6 16 12 4 25-2V5Q70-4 54 4z" fill="#e2b440" opacity=".35" />
              <path d="M56 55q6-22 24-34l5-2v37z" fill="#fdf0c4" opacity=".6" />
            </BrandArt>
            <BrandName>Express</BrandName>
          </RibbonBrand>
        </Ribbon>
        <Body>
          <Sidebar>
            <InfoCard>
              <InfoTitle>Text</InfoTitle>
              <InfoText>Zum Festlegen der Texteigenschaften.</InfoText>
            </InfoCard>
            <Section $h={85}>
              <SectionTitle>Schrift</SectionTitle>
              <SelectRow>
                <Dropdown label="Schriftart" value="Arial" w={139} />
                <Dropdown label="Schriftgröße" value="24" w={55} />
              </SelectRow>
              <ButtonRow $end>
                <PanelButton $small aria-label="Größer"><SizeGlyph up /></PanelButton>
                <PanelButton $small aria-label="Kleiner"><SizeGlyph /></PanelButton>
              </ButtonRow>
            </Section>
            <Section $h={72}>
              <SectionTitle>Stil</SectionTitle>
              <ButtonRow>
                <PanelButton aria-label="Fett"><Glyph size={21} /></PanelButton>
                <PanelButton aria-label="Kursiv"><Glyph size={20} slant /></PanelButton>
                <PanelButton aria-label="Unterstrichen"><Glyph size={18} underline /></PanelButton>
                <PanelButton aria-label="Kontur"><OutlineGlyph /></PanelButton>
              </ButtonRow>
            </Section>
            <Section $h={108}>
              <SectionTitle>Textposition</SectionTitle>
              <ButtonRow>
                <PanelButton $on aria-label="Linksbündig"><AlignIcon kind="left" /></PanelButton>
                <PanelButton aria-label="Zentriert"><AlignIcon kind="center" /></PanelButton>
                <PanelButton aria-label="Rechtsbündig"><AlignIcon kind="right" /></PanelButton>
                <PanelButton aria-label="Blocksatz"><AlignIcon kind="block" /></PanelButton>
              </ButtonRow>
              <WideButton>
                <FixedIcon />
                <WideLabel>Feste Rahmengröße<br />(Zeilenumbruch)</WideLabel>
              </WideButton>
            </Section>
            <Section $h={80}>
              <SectionTitle>Richtung</SectionTitle>
              <Direction>
                <DirectionIcon />
                <Options>
                  <RadioLabel><Radio type="radio" name="dir" defaultChecked />Horizontaler Text</RadioLabel>
                  <RadioLabel><Radio type="radio" name="dir" />VertikalerText</RadioLabel>
                </Options>
              </Direction>
            </Section>
          </Sidebar>
          <Editor>
            <Toolbar>
              <Tool aria-label="Auswahl"><Pointer /></Tool>
              <Tool $on aria-label="Text"><BoldA /></Tool>
              <Tool $drop $on aria-label="Textoptionen"><Arrow /></Tool>
              <Tool aria-label="Linie"><Line /></Tool>
              <Tool $drop aria-label="Linienoptionen"><Arrow /></Tool>
              <Tool aria-label="Rechteck"><Square /></Tool>
              <Tool $drop aria-label="Formoptionen"><Arrow /></Tool>
              <Tool aria-label="Tabelle"><TableIcon /></Tool>
              <ToolLine />
              <Tool aria-label="Ausrichtung"><FeedIcon /></Tool>
              <ToolLine />
              <Tool aria-label="Ausschneiden"><Cut /></Tool>
              <Tool aria-label="Kopieren"><Copy /></Tool>
              <Tool aria-label="Einfügen"><Paste /></Tool>
              <ToolLine />
              <Tool aria-label="Rückgängig"><Undo /></Tool>
              <Tool aria-label="Wiederholen"><Redo /></Tool>
              <ToolLine />
              <Tool aria-label="Eigenschaften"><Props /></Tool>
            </Toolbar>
            <Workspace>
              <UnitCell>mm</UnitCell>
              <HorizontalRuler />
              <ScrollColumn>
                <ScrollButton aria-label="Nach oben"><Arrow dir="up" color="#999" /></ScrollButton>
                <ScrollButton aria-label="Nach unten"><Arrow color="#999" /></ScrollButton>
              </ScrollColumn>
              <VerticalRuler />
              <Canvas>
                <Tape />
                <TapeWidth>18 mm</TapeWidth>
                <TextFrame>
                  <FrameInner>
                    <FrameInput aria-label="Textobjekt" defaultValue="TEST" />
                    <Caret />
                  </FrameInner>
                  {handles.map(([x, y]) => <Handle key={`${x}-${y}`} $x={x} $y={y} />)}
                </TextFrame>
                <Ghost>Rechteckiges Ausschneiden</Ghost>
              </Canvas>
              <SheetRow>
                <SheetTab>Blatt 1</SheetTab>
                <SheetScroll>
                  <SheetScrollStart>
                    <svg width="12" height="12" viewBox="0 0 12 12"><path d="M4 2.500h7v6L9 10H4z" fill="#fff" stroke="#777" /><path d="M3.500 0v7M0 3.500h7M1 1l5 5M6 1L1 6" stroke="#eba030" /></svg>
                    <ScrollButton aria-label="Nach links"><Arrow dir="left" color="#999" /></ScrollButton>
                  </SheetScrollStart>
                  <SheetScrollEnd>
                    <ScrollButton aria-label="Nach rechts"><Arrow dir="right" color="#999" /></ScrollButton>
                    <Splitter />
                  </SheetScrollEnd>
                </SheetScroll>
              </SheetRow>
              <Corner />
            </Workspace>
          </Editor>
        </Body>
        <StatusBar>
          <Snap><svg width="14" height="14" viewBox="0 0 14 14"><path d="M1 12h7M12 2L6 8M5 3v6h6" fill="none" stroke="#fff" strokeWidth="2" /></svg>Snap</Snap>
          <ModeButton $on>Express</ModeButton>
          <ModeButton>Professional</ModeButton>
          <Printer><Dropdown label="Drucker" value="Brother PT-2430PC" w={122} h={20} /></Printer>
          <Zoom>
            <button aria-label="Verkleinern"><RoundSign /></button>
            <Dropdown label="Zoom" value="100 %" w={60} h={20} />
            <button aria-label="Vergrößern"><RoundSign plus /></button>
          </Zoom>
        </StatusBar>
        <Desk />
      </App>
    </>
  );
}
